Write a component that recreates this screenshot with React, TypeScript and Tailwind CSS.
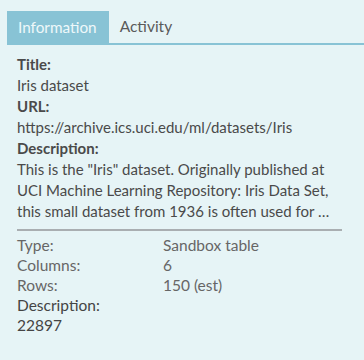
export default function App() {
  return (
    <div className="min-h-[360px] w-full bg-[#e6f4f6] pt-[11px] font-['Lato',sans-serif] text-[#4a4a4a]">
      {/* Tabs */}
      <div className="ml-[7px] flex items-end border-b-2 border-[#88c3d5]">
        <div className="flex h-[32px] items-center bg-[#88c3d5] pl-[11px] pr-[12px] text-[15.3px] text-[#eef8fa]">
          Information
        </div>
        <div className="flex h-[32px] items-center px-[11px] text-[15.5px] text-[#5a5a5a]">
          Activity
        </div>
      </div>

      {/* Information */}
      <div className="px-[17px] pt-[9px] pr-[22px]">
        <div className="text-[15px] leading-[21px]">
          <div className="font-bold">Title:</div>
          <div>Iris dataset</div>
          <div className="font-bold">URL:</div>
          <div className="truncate">https://archive.ics.uci.edu/ml/datasets/Iris</div>
          <div className="font-bold">Description:</div>
          <div>
            This is the "Iris" dataset. Originally published at UCI Machine Learning Repository: Iris Data Set,
            this small dataset from 1936 is often used for …
          </div>
        </div>

        <div className="mt-[7px] border-t-2 border-[#a9aeb1]" />

        <div className="pt-[4px] text-[15.5px] leading-[20px]">
          <div className="grid grid-cols-[146px_1fr] text-[#666]">
            <div>Type:</div>
            <div>Sandbox table</div>
            <div>Columns:</div>
            <div>6</div>
            <div>Rows:</div>
            <div>150 (est)</div>
          </div>
          <div className="text-[#444]">Description:</div>
          <div className="text-[#444]">22897</div>
        </div>
      </div>
    </div>
  );
}
